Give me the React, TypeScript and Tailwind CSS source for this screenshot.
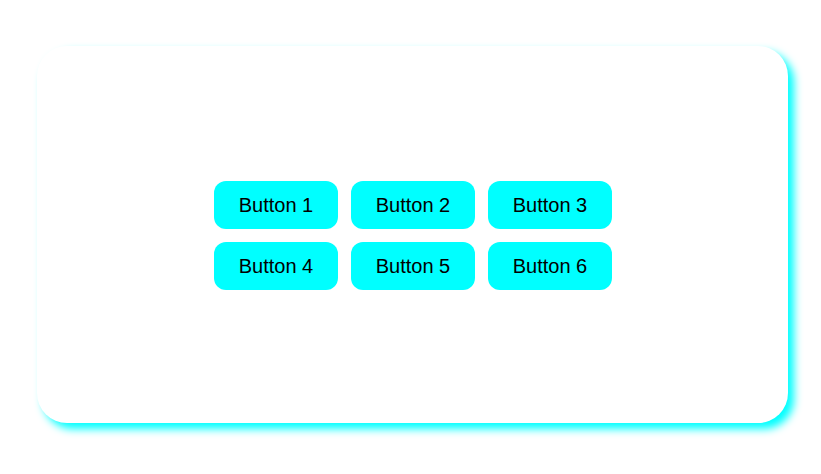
const buttons = ["Button 1", "Button 2", "Button 3", "Button 4", "Button 5", "Button 6"];

export default function App() {
  return (
    <div className="h-[474px] w-[821px] bg-white pl-[37px] pt-[46px] font-['Liberation_Sans',Arial,sans-serif]">
      <div className="flex h-[377px] w-[751px] items-center justify-center rounded-[30px] bg-white shadow-[6px_6px_8px_#00ffff]">
        <div className="ml-px mt-[2px] grid grid-cols-3 gap-[13px]">
          {buttons.map((label) => (
            <button
              key={label}
              className="flex h-[48px] w-[124px] items-center justify-center rounded-[12px] bg-[#00ffff] text-[20px] text-black"
            >
              {label}
            </button>
          ))}
        </div>
      </div>
    </div>
  );
}
